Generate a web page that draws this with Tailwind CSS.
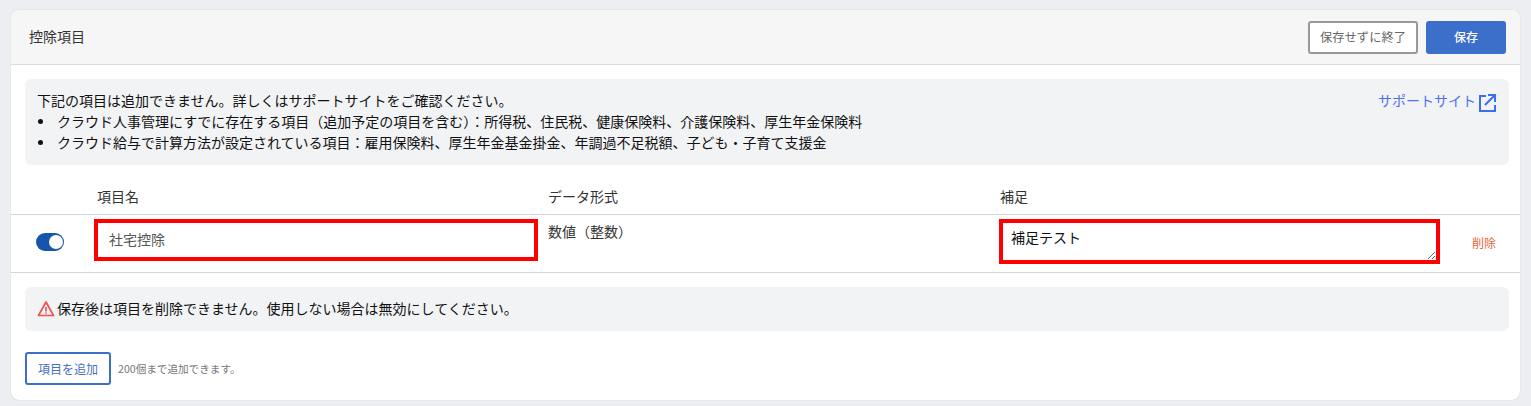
<!DOCTYPE html>
<html lang="ja">
  <head>
    <meta charset="UTF-8" />
    <title>控除項目</title>
    <script src="https://cdn.jsdelivr.net/npm/@tailwindcss/browser@4"></script>
  </head>
  <body class="bg-[#eceef1] h-[406px] overflow-hidden pt-[10px] px-[11px] font-['Noto_Sans_CJK_JP','Noto_Sans',sans-serif] text-[14px] text-[#333]">
    <div class="bg-white rounded-lg h-[390px] shadow-[0_0_1px_rgba(0,0,0,0.25)] overflow-hidden">
      <!-- header -->
      <div class="h-[55px] bg-[#f6f6f7] border-b border-[#dcdcdc] flex items-center justify-between pl-[18px] pr-[14px]">
        <h2 class="text-[#333] mt-[-2px]">控除項目</h2>
        <div class="flex gap-[8px]">
          <button class="w-[110px] h-[33px] bg-white border-2 border-[#999] rounded-[3px] text-[12.3px] text-[#666]">保存せずに終了</button>
          <button class="w-[80px] h-[33px] bg-[#3b6fc9] rounded-[3px] text-[12px] font-medium text-white">保存</button>
        </div>
      </div>

      <!-- notice -->
      <div class="mx-[14px] mr-[11px] mt-[14px] h-[86px] bg-[#f2f3f5] rounded-md px-[12px] pt-[11px] flex justify-between text-[#111] leading-[21px]">
        <div>
          <p>下記の項目は追加できません。詳しくはサポートサイトをご確認ください。</p>
          <ul>
            <li class="flex items-center"><span class="w-[5px] h-[5px] rounded-full bg-[#111] ml-[1px] mr-[14px]"></span>クラウド人事管理にすでに存在する項目（追加予定の項目を含む）：所得税、住民税、健康保険料、介護保険料、厚生年金保険料</li>
            <li class="flex items-center"><span class="w-[5px] h-[5px] rounded-full bg-[#111] ml-[1px] mr-[14px]"></span>クラウド給与で計算方法が設定されている項目：雇用保険料、厚生年金基金掛金、年調過不足税額、子ども・子育て支援金</li>
          </ul>
        </div>
        <a class="flex items-start gap-[1px] text-[#4f6ff0] h-[20px]">サポートサイト
          <svg class="w-[20px] h-[20px] mt-[3px]" viewBox="0 0 20 20" fill="none" stroke="#3b6ff0" stroke-width="2">
            <path d="M9 3H3v15h15v-6" />
            <path d="M11 2h7v7M18 2L8 12" />
          </svg>
        </a>
      </div>

      <!-- table head -->
      <div class="grid grid-cols-[86px_451px_452px_1fr] h-[35px] mt-[15px] pb-[2px] border-b border-[#d5d5dd] items-center text-[#333]">
        <div></div>
        <div>項目名</div>
        <div>データ形式</div>
        <div>補足</div>
      </div>

      <!-- row -->
      <div class="grid grid-cols-[83px_454px_451px_441px_1fr] h-[58px] border-b border-[#d5d5dd]">
        <div class="flex items-center justify-center pr-[5px]">
          <span class="w-[28px] h-[18px] bg-[#1555ab] rounded-full flex items-center justify-end pr-[1px] mt-[-3px]">
            <span class="w-[14px] h-[14px] bg-white rounded-full"></span>
          </span>
        </div>
        <div class="pt-[4px]">
          <input value="社宅控除" class="block w-[444px] h-[42px] border-4 border-[#f00] px-[11px] pb-[3px] outline-none text-[#555]" />
        </div>
        <div class="pt-[6px] text-[#333]">数値（整数）</div>
        <div class="pt-[4px]">
          <textarea class="block w-[441px] h-[45px] border-4 border-[#f00] px-[8px] py-[4px] outline-none text-[#111]">補足テスト</textarea>
        </div>
        <div class="pl-[32px] pt-[20px] text-[12px] text-[#e8643a] leading-[16px]">削除</div>
      </div>

      <!-- warning -->
      <div class="mx-[14px] mr-[11px] mt-[14px] h-[44px] pb-[2px] bg-[#f2f3f5] rounded-md flex items-center pl-[12px] text-[#111]">
        <svg class="w-[18px] h-[18px] mr-[2px] mt-[2px]" viewBox="0 0 18 18" fill="none" stroke="#ef5350" stroke-width="1.7" stroke-linejoin="round">
          <path d="M9 2L1.5 15.5h15z" />
          <path d="M9 7v4.5M9 12.6v1.2" />
        </svg>
        保存後は項目を削除できません。使用しない場合は無効にしてください。
      </div>

      <!-- add -->
      <div class="mx-[14px] mt-[21px] flex items-center">
        <button class="w-[86px] h-[33px] bg-white border-2 border-[#3b6fc9] rounded-[3px] text-[12px] text-[#4a6fc0]">項目を追加</button>
        <span class="ml-[7px] text-[10.6px] text-[#777]">200個まで追加できます。</span>
      </div>
    </div>
  </body>
</html>
